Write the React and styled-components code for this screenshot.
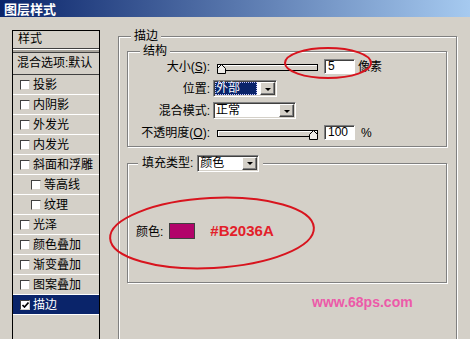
import React from "react";
import styled, { createGlobalStyle } from "styled-components";

const GlobalStyle = createGlobalStyle`
  html, body {
    margin: 0;
    padding: 0;
    background: #d4d0c8;
  }
  body {
    font-family: "Liberation Sans", "Noto Sans CJK SC", sans-serif;
    font-size: 12px;
    color: #000;
  }
  * {
    box-sizing: border-box;
  }
`;

const Window = styled.div`
  position: relative;
  width: 470px;
  height: 339px;
  overflow: hidden;
  background: #d4d0c8;
`;

const TitleBar = styled.div`
  height: 17px;
  padding-left: 4px;
  line-height: 17px;
  background: linear-gradient(to right, #0a246a, #a6caf0);
  color: #fff;
  font-family: "Noto Sans CJK SC", sans-serif;
  font-size: 13px;
  font-weight: bold;
`;

const Body = styled.div`
  display: flex;
  align-items: flex-start;
  padding: 13px 0 0 12px;
`;

/* left list of effects */

const StyleList = styled.div`
  width: 88px;
  height: 330px;
  flex: none;
  border: 1px solid #000;
`;

const ListHeader = styled.div`
  height: 18px;
  line-height: 17px;
  padding-left: 5px;
  border-bottom: 1px solid #404040;
`;

const Splitter = styled.div`
  height: 4px;
  background: #a8a49c;
  border-top: 1px solid #fff;
  border-bottom: 1px solid #404040;
`;

const BlendRow = styled.div`
  height: 22px;
  line-height: 20px;
  padding-left: 4px;
  white-space: nowrap;
  border-bottom: 1px solid #404040;
`;

const Item = styled.div`
  height: 20px;
  display: flex;
  align-items: center;
  gap: 3px;
  padding-left: ${(p) => (p.$sub ? 18 : 7)}px;
  border-bottom: 1px solid #fff;
  background: ${(p) => (p.$active ? "#0a246a" : "transparent")};
  color: ${(p) => (p.$active ? "#fff" : "#000")};
  white-space: nowrap;
  line-height: 14px;
`;

const CheckBox = styled.span`
  width: 10px;
  height: 10px;
  flex: none;
  display: flex;
  align-items: center;
  justify-content: center;
  background: #fff;
  border: 1px solid;
  border-color: #404040 #d4d0c8 #d4d0c8 #404040;
`;

/* group boxes */

const GroupBox = styled.div`
  position: relative;
  border: 1px solid #808080;
  box-shadow: inset 1px 1px 0 #fff, 1px 1px 0 #fff;
`;

const Caption = styled.div`
  position: absolute;
  top: ${(p) => p.$top}px;
  left: ${(p) => p.$left}px;
  height: ${(p) => p.$h}px;
  padding: 0 ${(p) => p.$pad}px;
  display: flex;
  align-items: center;
  gap: 4px;
  background: #d4d0c8;
  line-height: 14px;
  white-space: nowrap;
`;

const StrokeGroup = styled(GroupBox)`
  width: 339px;
  height: 320px;
  margin: 6px 0 0 18px;
  padding: 14px 0 0 8px;
`;

const StructureBox = styled(GroupBox)`
  width: 320px;
  height: 96px;
  padding-top: 6px;
  display: flex;
  flex-direction: column;
  gap: 5px;
`;

const FillBox = styled(GroupBox)`
  width: 320px;
  height: 120px;
  margin-top: 16px;
  padding: 58px 0 0 8px;
`;

const FormRow = styled.div`
  height: 17px;
  display: grid;
  grid-template-columns: 82px auto;
  column-gap: 3px;
  align-items: center;
`;

const FieldLabel = styled.span`
  text-align: right;
  white-space: nowrap;
  line-height: 14px;
`;

const Controls = styled.div`
  display: flex;
  align-items: center;
`;

const Slider = styled.div`
  position: relative;
  width: 101px;
  height: 17px;
  margin-left: 4px;

  &::before {
    content: "";
    position: absolute;
    left: 0;
    right: 0;
    top: 6px;
    height: 5px;
    border: 1px solid #000;
    background: #d4d0c8;
    box-shadow: inset 1px 1px 0 #fff;
  }
`;

const Thumb = styled.svg`
  position: absolute;
  top: 6px;
  width: 9px;
  height: 10px;
`;

const NumberBox = styled.div`
  width: 31px;
  height: 15px;
  margin-left: ${(p) => p.$ml}px;
  padding-left: 3px;
  line-height: 12px;
  background: #fff;
  border: 1px solid;
  border-color: #808080 #fff #fff #808080;
  box-shadow: inset 1px 1px 0 #404040;
  font-size: 12px;
`;

const Unit = styled.span`
  margin-left: ${(p) => p.$ml}px;
  line-height: 14px;
`;

const Select = styled.div`
  width: ${(p) => p.$w}px;
  height: 17px;
  padding: 1px;
  display: flex;
  align-items: center;
  background: #fff;
  border: 1px solid;
  border-color: #808080 #fff #fff #808080;
  box-shadow: inset 1px 1px 0 #404040, inset -1px -1px 0 #d4d0c8;
`;

const SelectValue = styled.span`
  flex: 1;
  height: 13px;
  margin-right: 3px;
  padding-left: 1px;
  line-height: 13px;
  background: ${(p) => (p.$focus ? "#0a246a" : "transparent")};
  color: ${(p) => (p.$focus ? "#fff" : "#000")};
  outline: ${(p) => (p.$focus ? "1px dotted #c8c8ff" : "none")};
  outline-offset: -1px;
  white-space: nowrap;
`;

const DropButton = styled.span`
  width: 15px;
  height: 13px;
  flex: none;
  display: flex;
  align-items: center;
  justify-content: center;
  background: #d4d0c8;
  border: 1px solid;
  border-color: #fff #404040 #404040 #fff;
  box-shadow: inset -1px -1px 0 #808080;

  &::after {
    content: "";
    border-left: 3px solid transparent;
    border-right: 3px solid transparent;
    border-top: 3px solid #000;
    margin-top: 1px;
  }
`;

const ColorRow = styled.div`
  height: 17px;
  display: flex;
  align-items: center;
`;

const Swatch = styled.span`
  width: 26px;
  height: 16px;
  margin-left: 6px;
  background: #b2036a;
  border: 1px solid #404040;
`;

const HexText = styled.span`
  margin-left: 15px;
  color: #e3202a;
  font-family: "Liberation Sans", sans-serif;
  font-weight: bold;
  font-size: 15px;
`;

const Watermark = styled.div`
  margin: 11px 0 0 185px;
  line-height: 16px;
  color: #ec5aa9;
  font-family: "Liberation Sans", sans-serif;
  font-weight: bold;
  font-size: 14px;
`;

const Annotations = styled.svg`
  position: absolute;
  left: 0;
  top: 0;
  pointer-events: none;
`;

const effects = [
  { label: "投影" },
  { label: "内阴影" },
  { label: "外发光" },
  { label: "内发光" },
  { label: "斜面和浮雕" },
  { label: "等高线", sub: true },
  { label: "纹理", sub: true },
  { label: "光泽" },
  { label: "颜色叠加" },
  { label: "渐变叠加" },
  { label: "图案叠加" },
  { label: "描边", active: true },
];

function SliderControl({ value }) {
  return (
    <Slider>
      <Thumb
        viewBox="0 0 9 10"
        style={{ left: `calc((100% - 9px) * ${value / 100})` }}
      >
        <path d="M0.5 9.5 V4.5 L4.5 0.5 L8.5 4.5 V9.5 Z" fill="#eeece8" stroke="#000" />
      </Thumb>
    </Slider>
  );
}

function Dropdown({ width, value, focus }) {
  return (
    <Select $w={width}>
      <SelectValue $focus={focus}>{value}</SelectValue>
      <DropButton />
    </Select>
  );
}

export default function App() {
  return (
    <Window>
      <GlobalStyle />
      <TitleBar>图层样式</TitleBar>
      <Body>
        <StyleList>
          <ListHeader>样式</ListHeader>
          <Splitter />
          <BlendRow>混合选项:默认</BlendRow>
          {effects.map((fx) => (
            <Item key={fx.label} $sub={fx.sub} $active={fx.active}>
              <CheckBox>
                {fx.active ? (
                  <svg width="7" height="6" viewBox="0 0 7 6">
                    <path d="M0.5 3 L2.5 5 L6.5 0.5" fill="none" stroke="#000" strokeWidth="1.6" />
                  </svg>
                ) : null}
              </CheckBox>
              <span>{fx.label}</span>
            </Item>
          ))}
        </StyleList>

        <StrokeGroup>
          <Caption $top={-8} $left={12} $h={14} $pad={3}>描边</Caption>

          <StructureBox>
            <Caption $top={-8} $left={12} $h={14} $pad={3}>结构</Caption>
            <FormRow>
              <FieldLabel>
                大小(<u>S</u>):
              </FieldLabel>
              <Controls>
                <SliderControl value={0} />
                <NumberBox $ml={6}>5</NumberBox>
                <Unit $ml={3}>像素</Unit>
              </Controls>
            </FormRow>
            <FormRow>
              <FieldLabel>位置:</FieldLabel>
              <Controls>
                <Dropdown width={64} value="外部" focus />
              </Controls>
            </FormRow>
            <FormRow>
              <FieldLabel>混合模式:</FieldLabel>
              <Controls>
                <Dropdown width={83} value="正常" />
              </Controls>
            </FormRow>
            <FormRow>
              <FieldLabel>
                不透明度(<u>O</u>):
              </FieldLabel>
              <Controls>
                <SliderControl value={100} />
                <NumberBox $ml={6}>100</NumberBox>
                <Unit $ml={6}>%</Unit>
              </Controls>
            </FormRow>
          </StructureBox>

          <FillBox>
            <Caption $top={-10} $left={10} $h={18} $pad={4}>
              <span>填充类型:</span>
              <Dropdown width={62} value="颜色" />
            </Caption>
            <ColorRow>
              <span>颜色:</span>
              <Swatch />
              <HexText>#B2036A</HexText>
            </ColorRow>
          </FillBox>

          <Watermark>www.68ps.com</Watermark>
        </StrokeGroup>
      </Body>

      <Annotations width="470" height="339" viewBox="0 0 470 339">
        <ellipse cx="328" cy="63" rx="43" ry="15" fill="none" stroke="#d8141e" strokeWidth="2" />
        <ellipse
          cx="212"
          cy="233"
          rx="102"
          ry="35"
          fill="none"
          stroke="#d8141e"
          strokeWidth="2"
          transform="rotate(-3 212 233)"
        />
      </Annotations>
    </Window>
  );
}
